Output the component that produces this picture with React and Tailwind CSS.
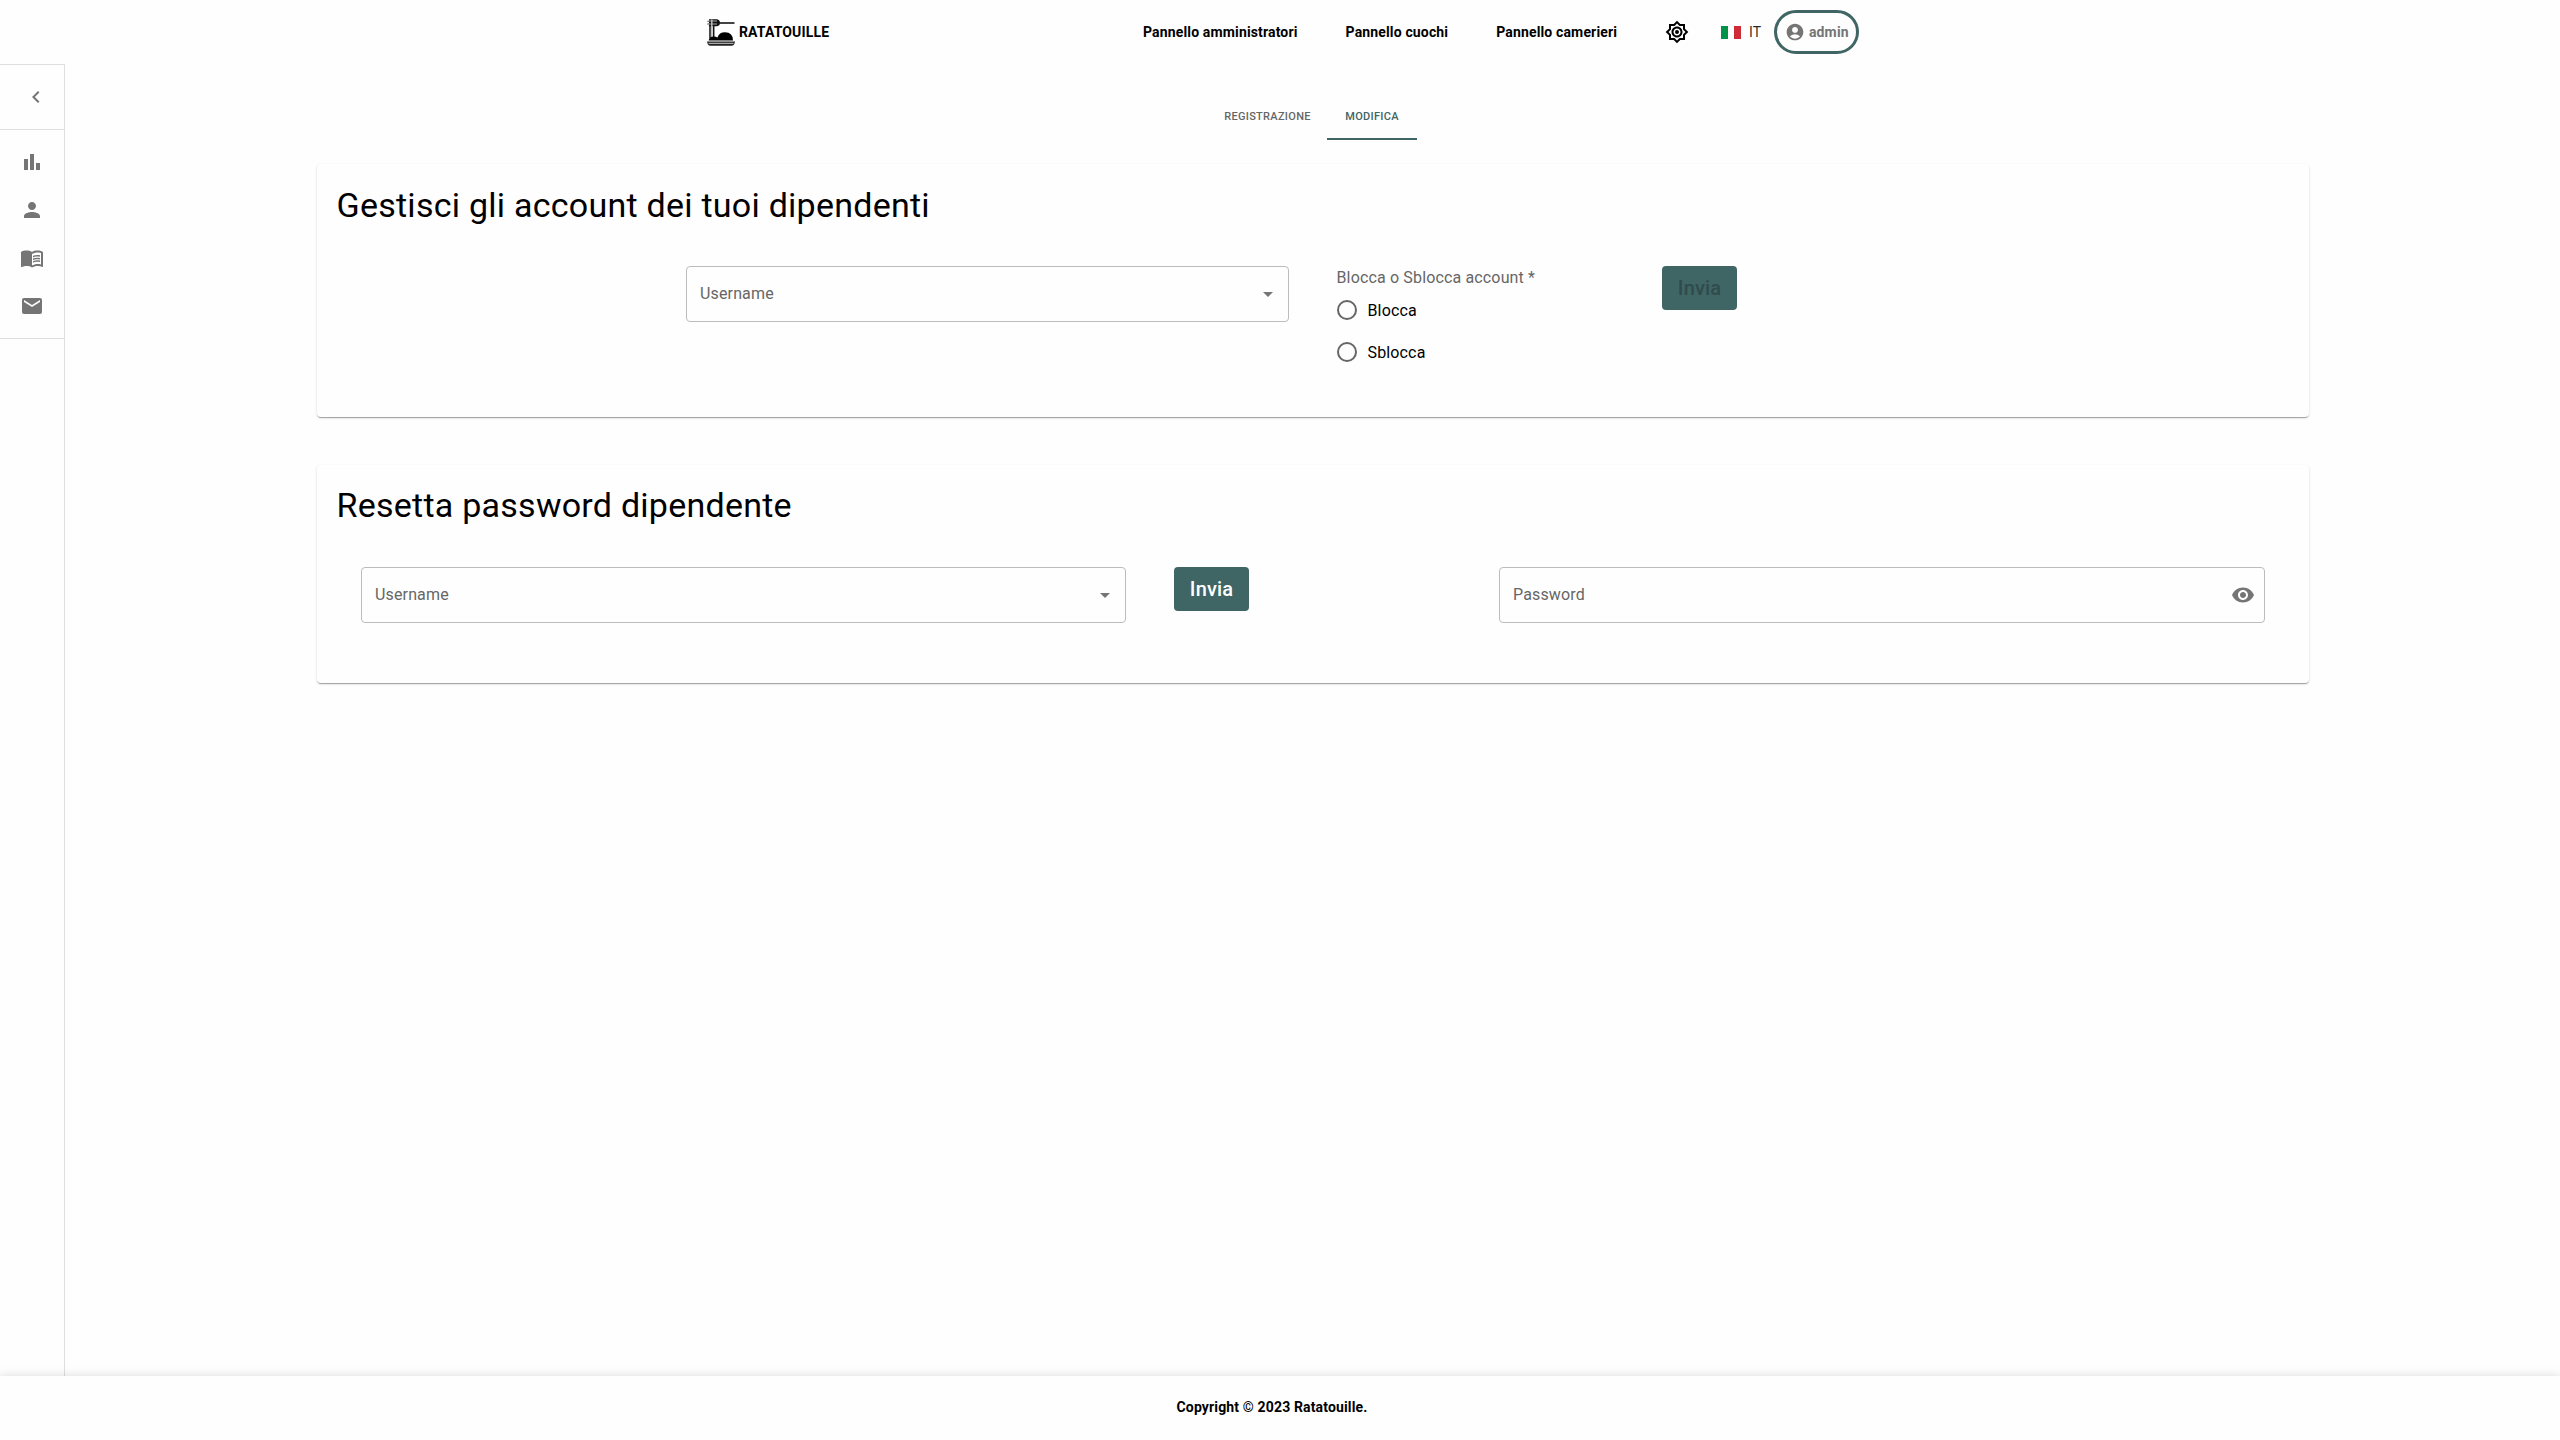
import { MdArrowDropDown, MdBarChart, MdPerson, MdMenuBook, MdEmail, MdChevronLeft, MdVisibility, MdAccountCircle, MdOutlineBrightness7 } from "react-icons/md";

function Logo() {
  return (
    <svg className="h-[28px] w-[28px]" viewBox="0 0 28 28">
      <path d="M2 1.200H10Q13 1.700 13 4.700T10 8.200H2V6.500H.5V5.600H2V4H.5V3.200H2Z" fill="#111" />
      <path d="M12.500 5H27.500" stroke="#222" strokeWidth="1.700" />
      <path d="M0 3H10M0 6H10" stroke="#bbb" strokeWidth=".9" />
      <path d="M4.800 1.500V20" stroke="#bbb" strokeWidth="1.500" />
      <path d="M3 7V20M6.700 7V19" stroke="#111" strokeWidth="1.500" />
      <path d="M1.700 22.500Q2 18.700 7 18.500Q9 18.500 10.500 19.500Q12 14.300 18 14.300Q26 14.500 26 22.500Z" fill="#000" />
      <path d="M0 23.500H28Q27.500 27.700 24.500 27.700H3.500Q.5 27.700 0 23.500Z" fill="#222" />
      <path d="M1.500 25.400H26.500" stroke="#aaa" strokeWidth="1.200" />
    </svg>
  );
}

function Flag() {
  return (
    <div className="flex h-[13px] w-5">
      <div className="flex-1 bg-[#009246]" />
      <div className="flex-1 bg-white" />
      <div className="flex-1 bg-[#ce2b37]" />
    </div>
  );
}

function Header() {
  return (
    <header className="flex h-16 shrink-0 items-center pl-[707px] text-[14px] leading-5 font-bold tracking-[0.15px] text-black">
      <Logo />
      <span className="ml-1 w-[91px]">RATATOUILLE</span>
      <nav className="ml-[313px] flex items-center gap-12">
        <span>Pannello amministratori</span>
        <span>Pannello cuochi</span>
        <span>Pannello camerieri</span>
      </nav>
      <MdOutlineBrightness7 className="ml-12 size-6" />
      <div className="ml-8 flex items-center gap-2 font-normal text-black/85">
        <Flag />
        <span>IT</span>
      </div>
      <button className="ml-[13px] flex h-11 w-[85px] items-center justify-center gap-1 rounded-[24px] border-3 border-[#406565] text-[#757575]">
        <MdAccountCircle className="size-5" />
        admin
      </button>
    </header>
  );
}

function Sidebar() {
  return (
    <aside className="w-[65px] shrink-0 border-t border-r border-[#dfdfdf] text-[#757575]">
      <div className="flex h-[65px] items-center border-b border-[#dfdfdf] pl-6">
        <MdChevronLeft className="size-6" />
      </div>
      <div className="flex h-[209px] flex-col items-center gap-6 border-b border-[#dfdfdf] pt-5">
        <MdBarChart className="size-6" />
        <MdPerson className="size-6" />
        <MdMenuBook className="size-6" />
        <MdEmail className="size-6" />
      </div>
    </aside>
  );
}

function Card({ title, className, children }) {
  return (
    <section className={"rounded-[4px] bg-[#fefefe] pr-5 pl-[19.5px] shadow-[0px_2px_1px_-1px_rgba(0,0,0,0.2),0px_1px_1px_0px_rgba(0,0,0,0.14),0px_1px_3px_0px_rgba(0,0,0,0.12)] " + className}>
      <h2 className="text-[34px] leading-[46px] tracking-[0.25px] text-black">{title}</h2>
      {children}
    </section>
  );
}

function Field({ label, className, children }) {
  return (
    <div className={"flex h-14 items-center justify-between rounded-[4px] border border-[#bcbcbc] pl-[13.5px] text-base tracking-[0.15px] text-[#666] " + className}>
      {label}
      {children}
    </div>
  );
}

function Radio({ label }) {
  return (
    <div className="flex h-[42px] items-center gap-[11px] text-base tracking-[0.15px] text-black">
      <span className="mb-[2px] size-5 rounded-full border-2 border-[#666]" />
      {label}
    </div>
  );
}

export default function App() {
  return (
    <div className="flex h-[1440px] w-[2560px] flex-col overflow-hidden bg-[#fefefe] font-['Roboto',sans-serif]">
      <Header />
      <div className="flex flex-1">
        <Sidebar />
        <main className="flex-1 pl-[252px]">
          <div className="flex h-[76px] pl-[891px] text-[11px] leading-[13px] font-medium tracking-[0.3px]">
            <div className="flex h-[76px] w-[119px] items-center justify-center pt-[29px] text-[#666]">REGISTRAZIONE</div>
            <div className="flex h-[76px] w-[90px] items-center justify-center border-b-2 border-[#406565] pt-[31px] text-[#406565]">MODIFICA</div>
          </div>
          <Card title="Gestisci gli account dei tuoi dipendenti" className="mt-6 h-[253px] w-[1992px] pt-[18px]">
            <div className="mt-[38px] flex pl-[349px]">
              <Field label="Username" className="w-[603px] pr-2">
                <MdArrowDropDown className="size-6 text-[#757575]" />
              </Field>
              <div className="ml-12 w-[325px]">
                <div className="h-6 text-base leading-[23px] tracking-[0.15px] text-[#666]">Blocca o Sblocca account *</div>
                <Radio label="Blocca" />
                <Radio label="Sblocca" />
              </div>
              <button className="h-11 w-[75px] rounded-[4px] bg-[#406565] pl-px text-xl font-medium tracking-[0.15px] text-[#2f4b4b]">Invia</button>
            </div>
          </Card>
          <Card title="Resetta password dipendente" className="mt-12 h-[218px] w-[1992px] pt-[17px]">
            <div className="mt-[39px] flex pl-6">
              <Field label="Username" className="w-[765px] pr-2">
                <MdArrowDropDown className="size-6 text-[#757575]" />
              </Field>
              <button className="ml-12 h-11 w-[75px] rounded-[4px] bg-[#406565] pl-px text-xl font-medium tracking-[0.15px] text-white">Invia</button>
              <Field label="Password" className="ml-[250px] w-[766px] pr-[9px]">
                <MdVisibility className="size-6 text-[#757575]" />
              </Field>
            </div>
          </Card>
        </main>
      </div>
      <footer className="flex h-16 shrink-0 items-center justify-center bg-[#fefefe] pr-4 pb-[2px] text-[14px] leading-5 font-bold tracking-[0.15px] text-black shadow-[0_0_10px_rgba(0,0,0,0.15)]">
        Copyright © 2023 Ratatouille.
      </footer>
    </div>
  );
}
